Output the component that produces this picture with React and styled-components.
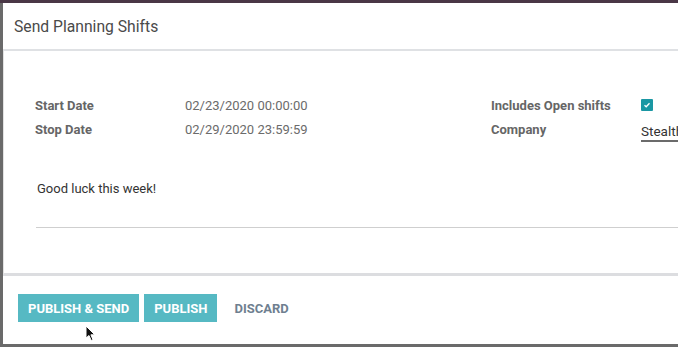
import React from 'react';
import styled, { createGlobalStyle } from 'styled-components';

const GlobalStyle = createGlobalStyle`
  html, body {
    margin: 0;
    padding: 0;
    background: #6f6f6f;
  }
  * {
    box-sizing: border-box;
  }
`;

const fields = {
  left: [
    { label: 'Start Date', value: '02/23/2020 00:00:00' },
    { label: 'Stop Date', value: '02/29/2020 23:59:59' },
  ],
};

const App = () => {
  return (
    <Screen>
      <GlobalStyle />
      <TopStrip />
      <Modal>
        <Header>
          <Title>Send Planning Shifts</Title>
        </Header>
        <Body>
          <FieldGroups>
            <Group>
              {fields.left.map(f => (
                <FieldRow key={f.label}>
                  <Label>{f.label}</Label>
                  <Value>{f.value}</Value>
                </FieldRow>
              ))}
            </Group>
            <Group $narrow>
              <FieldRow>
                <Label>Includes Open shifts</Label>
                <Checkbox>
                  <svg width="8" height="8" viewBox="0 0 8 8">
                    <path d="M1.5 4.2 L3.2 5.8 L6.5 2.2" fill="none" stroke="#fff" strokeWidth="1.3" />
                  </svg>
                </Checkbox>
              </FieldRow>
              <FieldRow>
                <Label>Company</Label>
                <SelectValue>Stealth</SelectValue>
              </FieldRow>
            </Group>
          </FieldGroups>
          <Note>Good luck this week!</Note>
        </Body>
        <Footer>
          <Button>Publish &amp; Send</Button>
          <Button>Publish</Button>
          <LinkButton>Discard</LinkButton>
          <Cursor width="12" height="17" viewBox="0 0 12 17">
            <path d="M1 1 L1 13 L4 10.5 L6.2 15.5 L8 14.7 L5.9 9.8 L9.8 9.8 Z" fill="#111" stroke="#fff" strokeWidth="1" />
          </Cursor>
        </Footer>
      </Modal>
    </Screen>
  );
};

export default App;

const Screen = styled.div`
  position: relative;
  width: 678px;
  height: 347px;
  overflow: hidden;
  background: #6a6a6a;
  font-family: Roboto, 'Liberation Sans', sans-serif;
`;

const TopStrip = styled.div`
  height: 3px;
  background: #4a3746;
`;

const Modal = styled.div`
  margin-left: 3px;
  width: 760px;
  height: 341px;
  background: #fff;
  display: flex;
  flex-direction: column;
`;

const Header = styled.div`
  height: 48px;
  padding: 0 11px;
  display: flex;
  align-items: center;
  border-bottom: 2px solid #dfe1e4;
`;

const Title = styled.h4`
  margin: 0;
  font-size: 15.7px;
  font-weight: 400;
  color: #4a4a4a;
`;

const Body = styled.div`
  height: 225px;
  border-left: 1px solid #e2e2e2;
  border-bottom: 3px solid #dcdde0;
  padding: 42px 0 0 31px;
`;

const FieldGroups = styled.div`
  display: flex;
`;

const Group = styled.div`
  flex: 0 0 ${p => (p.$narrow ? '240px' : '456px')};
`;

const FieldRow = styled.div`
  display: flex;
  align-items: center;
  height: 24px;
`;

const Label = styled.div`
  width: 150px;
  flex-shrink: 0;
  font-size: 13px;
  font-weight: 700;
  color: #666;
`;

const Value = styled.div`
  font-size: 13px;
  color: #6b6b6b;
`;

const Checkbox = styled.span`
  width: 12px;
  height: 12px;
  background: #1a97a3;
  border-radius: 1px;
  display: inline-flex;
  align-items: center;
  justify-content: center;
  margin-top: -1px;
`;

const SelectValue = styled.div`
  flex: 1;
  font-size: 13.5px;
  color: #333;
  padding-top: 4px;
  border-bottom: 2px solid #6b6b6b;
  height: 23px;
  margin-bottom: -3px;
`;

const Note = styled.div`
  margin-top: 40px;
  height: 47px;
  font-size: 13px;
  color: #333;
  border-bottom: 1px solid #cfcfcf;
  margin-left: 1px;
  padding-left: 1px;
`;

const Footer = styled.div`
  position: relative;
  flex: 1;
  display: flex;
  align-items: flex-start;
  gap: 5px;
  padding: 18px 0 0 15px;
`;

const Button = styled.button`
  height: 28px;
  padding: 0 10px;
  border: none;
  border-radius: 0;
  background: #56b9c3;
  color: #fff;
  font-family: Roboto, 'Liberation Sans', sans-serif;
  font-size: 13px;
  font-weight: 700;
  text-transform: uppercase;
`;

const LinkButton = styled(Button)`
  background: transparent;
  color: #6f7f90;
  margin-left: 7px;
  padding: 0 5px;
`;

const Cursor = styled.svg`
  position: absolute;
  left: 82px;
  top: 49px;
`;
